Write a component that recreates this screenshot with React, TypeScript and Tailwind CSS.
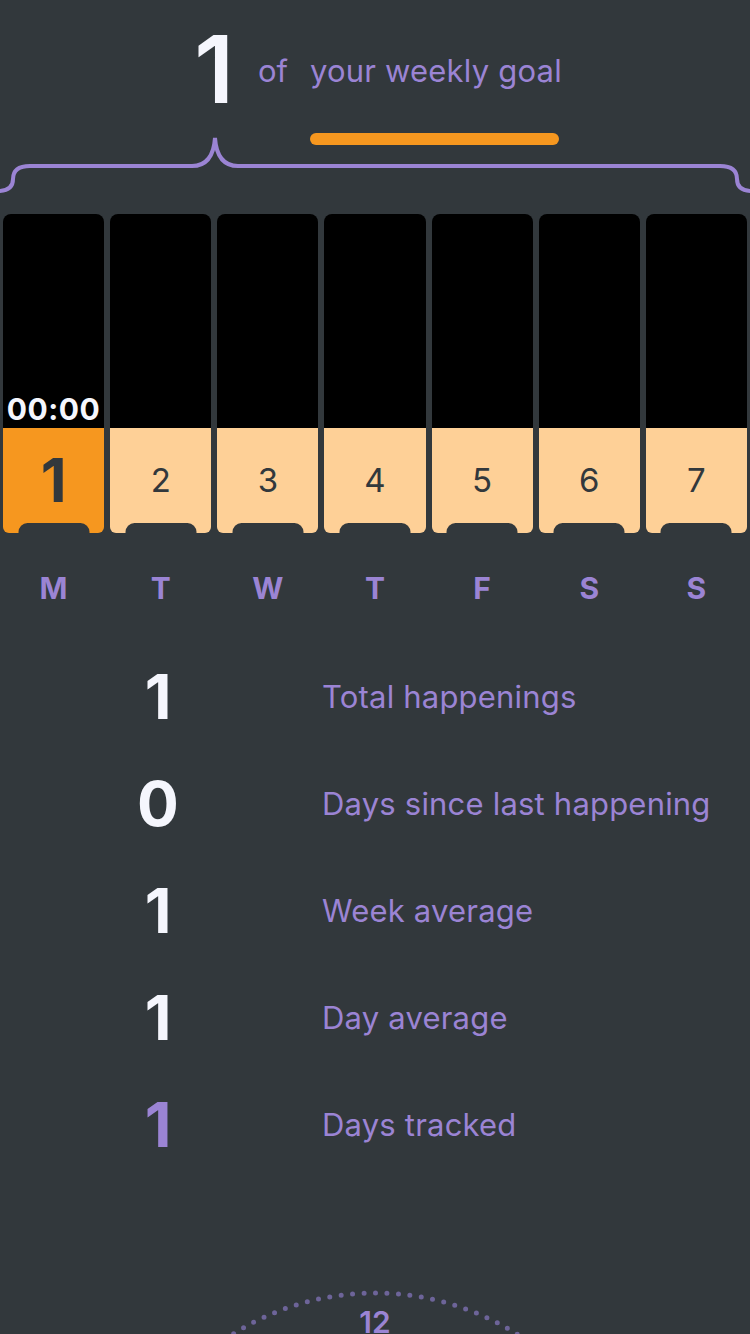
const days = ["M", "T", "W", "T", "F", "S", "S"]

const stats = [
  { value: "1", label: "Total happenings" },
  { value: "0", label: "Days since last happening" },
  { value: "1", label: "Week average" },
  { value: "1", label: "Day average" },
  { value: "1", label: "Days tracked", accent: true },
]

function Brace() {
  return (
    <svg width="750" height="62" viewBox="0 0 750 62" className="block -mt-[11px]">
      <path
        d="M -2 57 Q 13 57 13 45 Q 13 32 30 32 H 192 Q 213 32 215 4 Q 217 32 238 32 H 720 Q 737 32 737 45 Q 737 57 752 57"
        fill="none"
        stroke="#9b84d4"
        strokeWidth="4"
        strokeLinecap="round"
      />
    </svg>
  )
}

function DayTile({ n, active }: { n: number; active?: boolean }) {
  return (
    <div className="relative flex-1 flex flex-col h-[319px]">
      <div className="h-[214px] bg-black rounded-t-[8px] flex items-end justify-center pb-[4px]">
        {active && (
          <span className="text-[30px] leading-[30px] font-bold text-[#f5f6fd] tracking-[0.5px]">00:00</span>
        )}
      </div>
      <div
        className={
          active
            ? "flex-1 rounded-b-[6px] bg-[#f6971f] flex items-center justify-center"
            : "flex-1 rounded-b-[6px] bg-[#fed097] flex items-center justify-center"
        }
      >
        {active ? (
          <span className="text-[60px] leading-none font-bold text-[#32383c] pb-[2px]">{n}</span>
        ) : (
          <span className="text-[33px] leading-none font-normal text-[#32383c]">{n}</span>
        )}
      </div>
      <div className="absolute bottom-0 left-1/2 -translate-x-1/2 w-[71px] h-[10px] rounded-t-[9px] bg-[#32383c]" />
    </div>
  )
}

export default function App() {
  return (
    <div
      className="min-h-[1334px] h-[1334px] overflow-hidden bg-[#32383c] text-[#9b84d4]"
      style={{ fontFamily: "Inter, 'Noto Sans', 'Liberation Sans', sans-serif" }}
    >
      {/* header */}
      <div className="flex justify-center items-start pt-[22px] pl-[6px] h-[145px]">
        <span className="text-[94px] leading-none font-semibold text-[#f5f6fd] mr-[24px]">1</span>
        <span className="mt-[31px] text-[31px] leading-[36px] mr-[22px]">of</span>
        <div className="flex flex-col mt-[31px]">
          <span className="text-[31px] leading-[36px] tracking-[0.2px]">your weekly goal</span>
          <div className="mt-[44px] h-[12px] w-[249px] rounded-full bg-[#f6971f]" />
        </div>
      </div>

      <Brace />

      {/* week tiles */}
      <div className="flex gap-[6px] px-[3px] mt-[18px]">
        {[1, 2, 3, 4, 5, 6, 7].map((n) => (
          <DayTile key={n} n={n} active={n === 1} />
        ))}
      </div>

      <div className="flex gap-[6px] px-[3px] mt-[37px]">
        {days.map((d, i) => (
          <div key={i} className="flex-1 text-center text-[30px] leading-[36px] font-bold">
            {d}
          </div>
        ))}
      </div>

      {/* stats */}
      <div className="mt-[37px] flex flex-col">
        {stats.map((s) => (
          <div key={s.label} className="flex items-center h-[107px]">
            <div
              className={
                s.accent
                  ? "w-[316px] text-center text-[62px] leading-none font-bold text-[#9b84d4]"
                  : "w-[316px] text-center text-[62px] leading-none font-bold text-[#f5f6fd]"
              }
            >
              {s.value}
            </div>
            <div className="pl-[6px] text-[31px] leading-[36px] tracking-[0.2px]">{s.label}</div>
          </div>
        ))}
      </div>

      {/* clock dial */}
      <div className="relative mt-[103px] h-[60px]">
        <svg width="750" height="60" viewBox="0 0 750 60" className="absolute inset-0">
          <circle
            cx="375"
            cy="278"
            r="266"
            fill="none"
            stroke="#6d6499"
            strokeWidth="5"
            strokeLinecap="round"
            strokeDasharray="0 11.5"
          />
        </svg>
        <div className="relative pt-[23px] text-center text-[30px] leading-[36px] font-semibold">12</div>
      </div>
    </div>
  )
}
